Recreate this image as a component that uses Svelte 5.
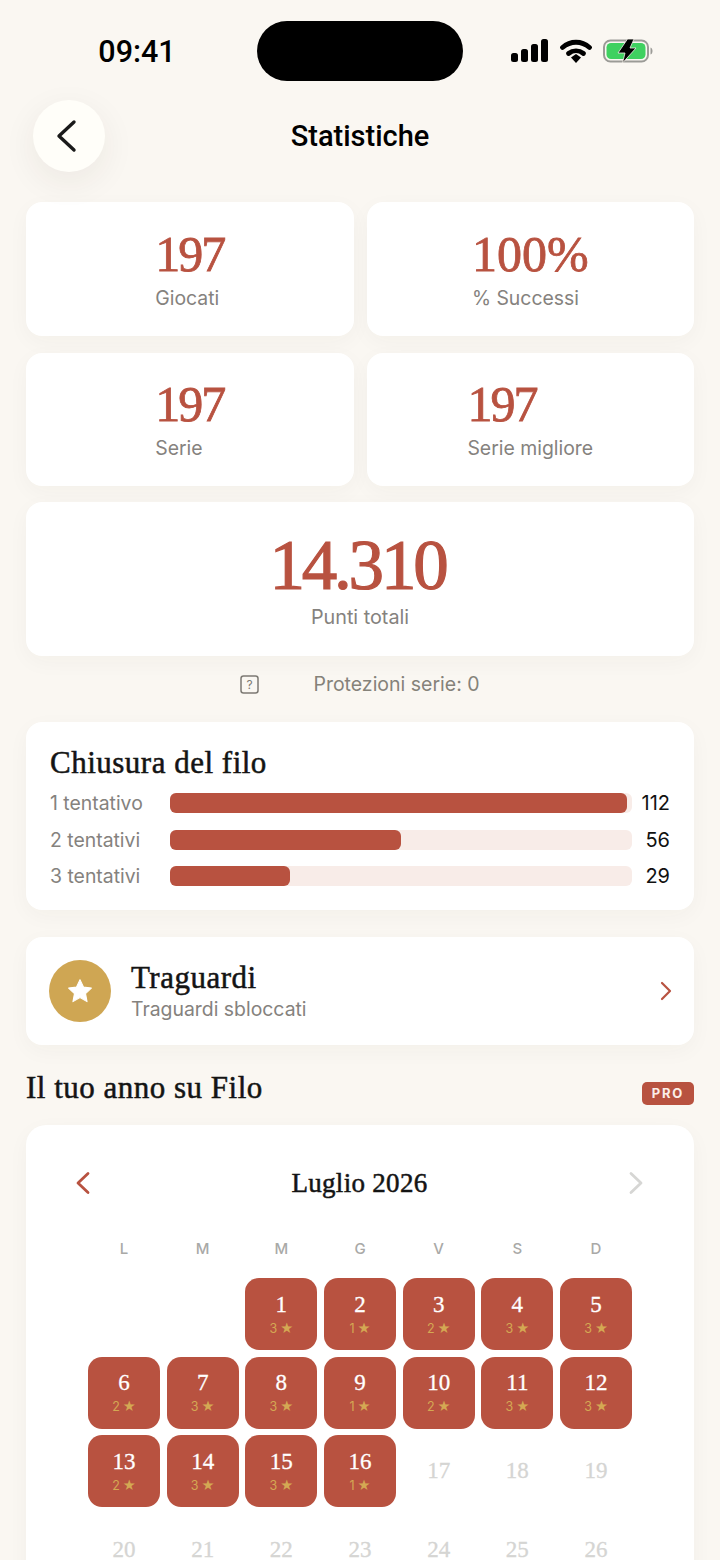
<script>
  const stats = [
    { value: '197', label: 'Giocati' },
    { value: '100%', label: '% Successi', wide: true },
    { value: '197', label: 'Serie' },
    { value: '197', label: 'Serie migliore' }
  ];

  const closes = [
    { label: '1 tentativo', pct: 99, count: 112 },
    { label: '2 tentativi', pct: 50, count: 56 },
    { label: '3 tentativi', pct: 26, count: 29 }
  ];

  const weekdays = ['L', 'M', 'M', 'G', 'V', 'S', 'D'];
  const stars = [3, 1, 2, 3, 3, 2, 3, 3, 1, 2, 3, 3, 2, 3, 3, 1];
  const days = Array.from({ length: 26 }, (_, i) => ({ day: i + 1, stars: stars[i] }));
</script>

<div class="screen">
  <div class="status">
    <span class="time">09:41</span>
    <div class="island"></div>
    <div class="status-icons">
      <svg width="37" height="23" viewBox="0 0 37 23">
        <rect x="0" y="14" width="7" height="9" rx="2.5" fill="#000" />
        <rect x="10" y="10" width="7" height="13" rx="2.5" fill="#000" />
        <rect x="20" y="5" width="7" height="18" rx="2.5" fill="#000" />
        <rect x="30" y="0" width="7" height="23" rx="2.5" fill="#000" />
      </svg>
      <svg width="32" height="24" viewBox="0 0 32 24">
        <path d="M2.500 8.500C10.500 1.500 21.500 1.500 29.500 8.500" fill="none" stroke="#000" stroke-width="4.800" stroke-linecap="round" />
        <path d="M8.500 14.500C13 11 19 11 23.500 14.500" fill="none" stroke="#000" stroke-width="4.800" stroke-linecap="round" />
        <path d="M11 18.500L16 15L21 18.500L16 24Z" fill="#000" />
      </svg>
      <svg width="50" height="24" viewBox="0 0 50 24">
        <rect x="1" y="1.500" width="44" height="21" rx="6.500" fill="none" stroke="#9b9b97" stroke-width="2" />
        <rect x="3.500" y="4" width="39" height="16" rx="4.500" fill="#3fd160" />
        <path d="M47.500 8.500c1.500.5 2 2 2 3.500s-.5 3-2 3.500z" fill="#9b9b97" />
        <path d="M24.500 0H31L27 9H33L19.500 24L22 14H15Z" fill="#000" stroke="#f4f0ea" stroke-width="0.800" />
      </svg>
    </div>
  </div>

  <header class="nav">
    <button class="back" aria-label="Indietro">
      <svg width="24" height="34" viewBox="0 0 24 34">
        <path d="M20 3L5 17L20 31" fill="none" stroke="#1a1a1a" stroke-width="3.400" stroke-linecap="round" stroke-linejoin="round" />
      </svg>
    </button>
    <h1>Statistiche</h1>
  </header>

  <main class="content">
    <div class="stat-grid">
      {#each stats as s}
        <div class="card stat">
          <div class="stat-inner">
            <span class="num" class:wide={s.wide}>{s.value}</span>
            <span class="stat-label">{s.label}</span>
          </div>
        </div>
      {/each}
    </div>

    <div class="card total">
      <span class="num big">14.310</span>
      <span class="stat-label">Punti totali</span>
    </div>

    <div class="protections">
      <svg width="19" height="19" viewBox="0 0 19 19">
        <rect x="1" y="1" width="17" height="17" rx="2.500" fill="none" stroke="#7d7a74" stroke-width="1.500" />
        <text x="9.500" y="14" text-anchor="middle" class="q">?</text>
      </svg>
      <span>Protezioni serie: 0</span>
    </div>

    <section class="card chart">
      <h2>Chiusura del filo</h2>
      <div class="rows">
        {#each closes as c}
          <div class="row">
            <span class="row-label">{c.label}</span>
            <div class="track"><div class="fill" style="width: {c.pct}%"></div></div>
            <span class="row-count">{c.count}</span>
          </div>
        {/each}
      </div>
    </section>

    <div class="card milestones">
      <div class="medal">
        <svg width="26" height="26" viewBox="0 0 24 24">
          <path d="M12 1.500l3.200 6.900 7.300.9-5.400 5.100 1.400 7.400-6.500-3.700-6.500 3.700 1.400-7.400-5.400-5.100 7.300-.9z" fill="#fff" stroke="#fff" stroke-linejoin="round" />
        </svg>
      </div>
      <div class="milestone-text">
        <h2>Traguardi</h2>
        <span>Traguardi sbloccati</span>
      </div>
      <svg class="go" width="12" height="20" viewBox="0 0 12 20">
        <path d="M2 2L10 10L2 18" fill="none" stroke="#b85240" stroke-width="2.200" stroke-linecap="round" stroke-linejoin="round" />
      </svg>
    </div>

    <div class="year-head">
      <h2>Il tuo anno su Filo</h2>
      <span class="pro">PRO</span>
    </div>

    <section class="card calendar">
      <div class="month">
        <svg width="16" height="24" viewBox="0 0 16 24">
          <path d="M13 2.500L3 12L13 21.500" fill="none" stroke="#b85240" stroke-width="2.800" stroke-linecap="round" stroke-linejoin="round" />
        </svg>
        <h3>Luglio 2026</h3>
        <svg width="16" height="24" viewBox="0 0 16 24">
          <path d="M3 2.500L13 12L3 21.500" fill="none" stroke="#d6d6d4" stroke-width="2.800" stroke-linecap="round" stroke-linejoin="round" />
        </svg>
      </div>
      <div class="weekdays">
        {#each weekdays as w}
          <span>{w}</span>
        {/each}
      </div>
      <div class="days">
        <div></div>
        <div></div>
        {#each days as d}
          {#if d.stars}
            <div class="day done">
              <span class="day-num">{d.day}</span>
              <span class="day-stars">{d.stars}<i>★</i></span>
            </div>
          {:else}
            <div class="day"><span class="day-num">{d.day}</span></div>
          {/if}
        {/each}
      </div>
    </section>
  </main>
</div>

<style>
  :global(body) {
    background: #faf7f2;
  }

  .screen {
    width: 720px;
    height: 1560px;
    overflow: hidden;
    background: #faf7f2;
    font-family: Inter, sans-serif;
    color: #111;
  }

  h1, h2, h3 {
    margin: 0;
    font-weight: 400;
  }

  .status {
    display: grid;
    grid-template-columns: 1fr 206px 1fr;
    align-items: center;
    padding-top: 21px;
    height: 60px;
  }

  .time {
    justify-self: center;
    margin-left: 17px;
    font-family: Roboto, sans-serif;
    font-size: 30.500px;
    font-weight: 500;
    color: #000;
  }

  .island {
    height: 60px;
    border-radius: 30px;
    background: #000;
  }

  .status-icons {
    display: flex;
    align-items: center;
    gap: 11.500px;
    padding-left: 48px;
    margin-top: -1px;
  }

  .nav {
    position: relative;
    display: flex;
    justify-content: center;
    align-items: center;
    height: 72px;
    margin-top: 19px;
  }

  .back {
    position: absolute;
    left: 33px;
    top: 0;
    width: 72px;
    height: 72px;
    padding: 0 6px 0 0;
    border: none;
    border-radius: 50%;
    background: #fffef9;
    box-shadow: 0 10px 34px rgba(60, 45, 30, 0.07);
    display: flex;
    align-items: center;
    justify-content: center;
  }

  .nav h1 {
    font-family: Roboto, sans-serif;
    font-size: 29px;
    font-weight: 500;
    color: #000;
  }

  .content {
    display: flex;
    flex-direction: column;
    padding: 30px 26px 0;
  }

  .card {
    background: #fff;
    border-radius: 16px;
    box-shadow: 0 6px 22px rgba(60, 45, 30, 0.035);
  }

  .stat-grid {
    display: grid;
    grid-template-columns: 1fr 1fr;
    gap: 17px 13px;
  }

  .stat {
    height: 133.500px;
    display: flex;
    align-items: center;
    justify-content: center;
  }

  .stat-inner {
    display: flex;
    flex-direction: column;
    align-items: flex-start;
    gap: 6px;
  }

  .num {
    font-family: 'Liberation Serif', serif;
    font-size: 50px;
    line-height: 52px;
    letter-spacing: -2px;
    color: #b85240;
    -webkit-text-stroke: 0.800px #b85240;
  }

  .num.wide {
    letter-spacing: 0;
  }

  .num.big {
    margin-right: 5px;
    font-size: 71px;
    line-height: 72px;
    letter-spacing: -3.200px;
    -webkit-text-stroke: 1.200px #b85240;
  }

  .stat-label {
    font-size: 19.400px;
    line-height: 24px;
    color: #85827e;
  }

  .total {
    margin-top: 16px;
    height: 154px;
    display: flex;
    flex-direction: column;
    align-items: center;
    justify-content: center;
  }

  .total .stat-label {
    margin-top: 4px;
    font-size: 19.800px;
  }

  .protections {
    display: flex;
    justify-content: center;
    align-items: center;
    gap: 54px;
    height: 66px;
    padding-bottom: 10px;
    box-sizing: border-box;
    font-size: 19.500px;
    color: #85827a;
  }

  .q {
    font-family: Inter, sans-serif;
    font-size: 12px;
    fill: #7d7a74;
  }

  .chart {
    padding: 24px 24px 26px;
  }

  .chart h2,
  .milestone-text h2,
  .year-head h2 {
    font-family: 'Liberation Serif', serif;
    font-size: 31px;
    line-height: 34px;
    letter-spacing: 0.500px;
    color: #141414;
    -webkit-text-stroke: 0.500px #141414;
  }

  .rows {
    display: flex;
    flex-direction: column;
    gap: 16.500px;
    margin-top: 11px;
  }

  .row {
    display: grid;
    grid-template-columns: 120px 462px 1fr;
    align-items: center;
    height: 20px;
  }

  .row-label {
    font-size: 19.400px;
    color: #85827e;
    white-space: nowrap;
  }

  .track {
    height: 20px;
    border-radius: 6px;
    background: #f8ece8;
  }

  .fill {
    height: 100%;
    border-radius: 6px;
    background: #b85240;
  }

  .row-count {
    justify-self: end;
    font-size: 20px;
    color: #111;
  }

  .milestones {
    margin-top: 27px;
    height: 108px;
    display: flex;
    align-items: center;
    padding: 0 22px 0 23px;
  }

  .medal {
    width: 62px;
    height: 62px;
    border-radius: 50%;
    background: #cfa653;
    display: flex;
    align-items: center;
    justify-content: center;
  }

  .milestone-text {
    display: flex;
    flex-direction: column;
    margin: -1px 0 0 20px;
    flex: 1;
  }

  .milestone-text span {
    font-size: 19.400px;
    line-height: 24px;
    margin-top: 2px;
    color: #85827e;
  }

  .year-head {
    display: flex;
    justify-content: space-between;
    align-items: center;
    height: 80px;
  }

  .year-head h2 {
    margin-top: 6px;
  }

  .pro {
    margin-top: 17px;
    width: 52px;
    height: 23px;
    line-height: 23px;
    text-align: center;
    border-radius: 5px;
    background: #b85240;
    color: #fbeee9;
    font-size: 13px;
    font-weight: 700;
    letter-spacing: 1.800px;
  }

  .calendar {
    padding: 40px 62px 40px;
    border-radius: 20px;
  }

  .month {
    display: flex;
    justify-content: space-between;
    align-items: center;
    margin: 0 -12px 0 -13px;
    height: 36px;
  }

  .month h3 {
    font-family: 'Liberation Serif', serif;
    font-size: 27px;
    letter-spacing: 0.300px;
    color: #141414;
    -webkit-text-stroke: 0.500px #141414;
  }

  .weekdays {
    display: grid;
    grid-template-columns: repeat(7, 1fr);
    gap: 6.670px;
    margin-top: 38px;
    text-align: center;
    font-size: 15px;
    font-weight: 500;
    line-height: 20px;
    color: #a9a9a7;
  }

  .days {
    display: grid;
    grid-template-columns: repeat(7, 1fr);
    gap: 6.670px;
    margin-top: 19px;
  }

  .day {
    aspect-ratio: 1;
    border-radius: 14px;
    display: flex;
    flex-direction: column;
    align-items: center;
    justify-content: center;
    color: #d5d5d3;
  }

  .day-num {
    font-family: 'Liberation Serif', serif;
    font-size: 23px;
    line-height: 26px;
    -webkit-text-stroke: 0.300px currentColor;
  }

  .done {
    background: #b85240;
    color: #fff;
  }

  .day-stars {
    display: flex;
    align-items: center;
    gap: 3px;
    margin-top: 2px;
    font-size: 12.500px;
    line-height: 17px;
    color: #d4a853;
  }

  .day-stars i {
    font-style: normal;
    font-family: 'DejaVu Sans', sans-serif;
    font-size: 14.500px;
  }
</style>
